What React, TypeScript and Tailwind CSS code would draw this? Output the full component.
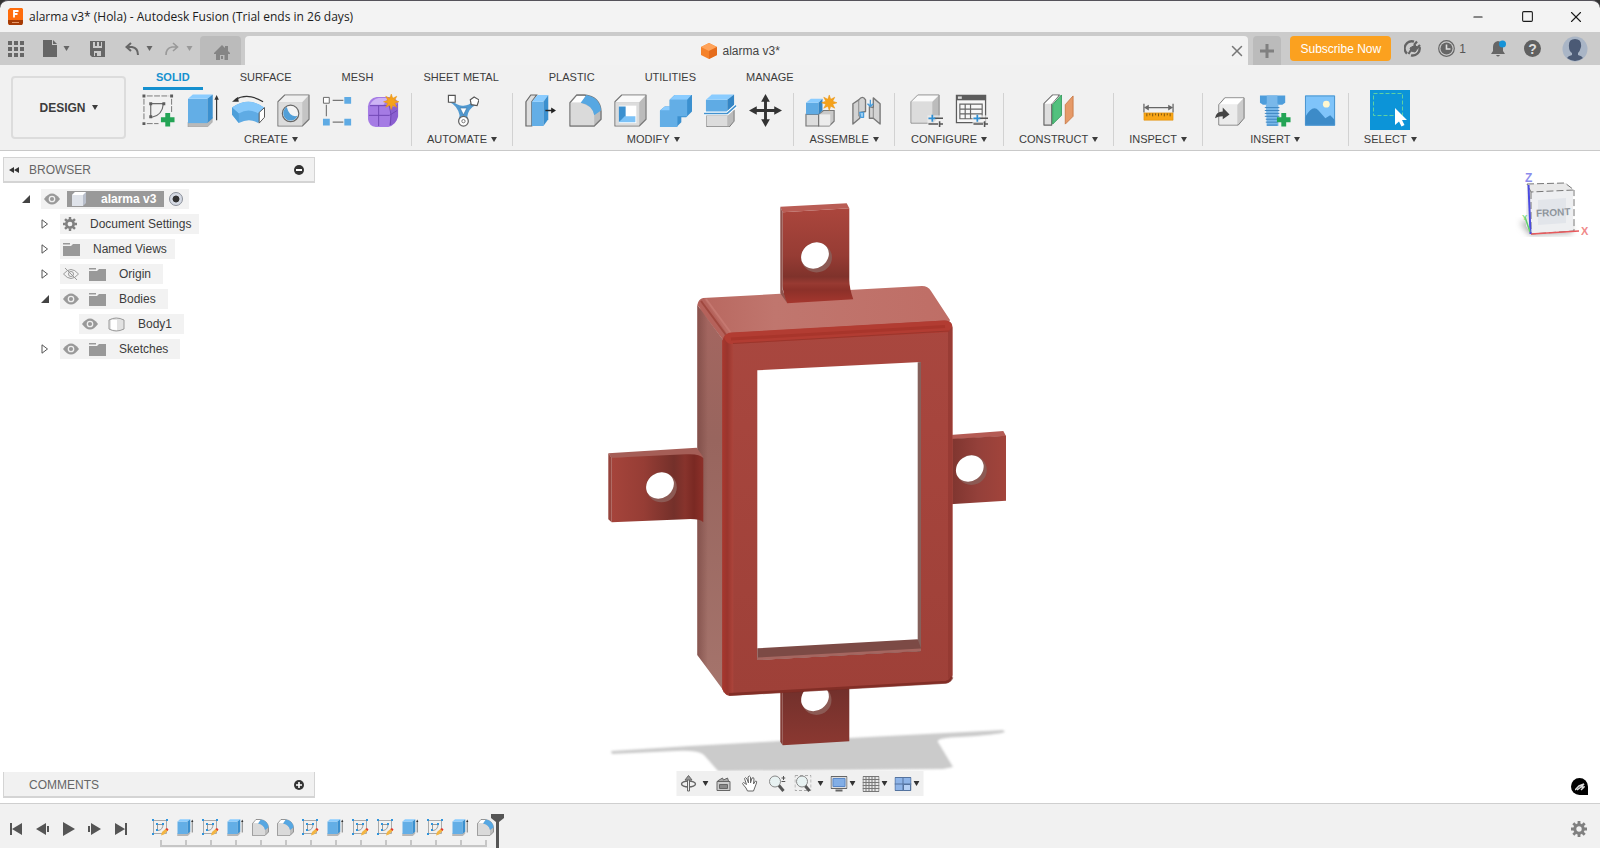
import React from 'react';
import { Minus, Square, X } from 'lucide-react';

type IconProps = { className?: string };

const tabs = ['SOLID', 'SURFACE', 'MESH', 'SHEET METAL', 'PLASTIC', 'UTILITIES', 'MANAGE'];

function Caret({ className = 'h-[5px] w-[6px]' }: IconProps) {
  return (
    <svg viewBox="0 0 6 5" className={`shrink-0 ${className}`} fill="currentColor">
      <path d="M0 0h6L3 5z" />
    </svg>
  );
}

function Star({ x, y }: { x: number; y: number }) {
  return (
    <path
      transform={`translate(${x} ${y})`}
      fill="#f5a21b"
      stroke="#e8920c"
      strokeWidth=".5"
      d="M0-8l1.500 4.400L5.700-5.700 3.600-1.500 8 0 3.600 1.500 5.700 5.700 1.500 3.600 0 8l-1.500-4.400-4.200 2.100 2.100-4.200L-8 0l4.400-1.500-2.100-4.200 4.200 2.100z"
    />
  );
}

/* ---------- ribbon icons, all on a 34 unit grid ---------- */

function SketchIcon() {
  return (
    <svg viewBox="0 0 34 34" fill="none">
      <path d="M5 2h23M2 5v22M5 30.500h12M30.500 5v14" stroke="#777" strokeDasharray="6 1.500" />
      <path d="M9 10h13M9 10v14M22 10q-1 12-12 14" stroke="#6a6a6a" strokeWidth="1.200" />
      <path d="M.5.500h3v3h-3zM29 .5h3v3h-3zM.5 29h3v3h-3zM7.500 8.500h3v3h-3zM21 8.500h3v3h-3zM7.500 22h3v3h-3z" fill="#5c5c5c" />
      <path d="M24 19.500h5V24h4.500v5H29v4.500h-5V29h-4.500v-5H24z" fill="#23a455" />
    </svg>
  );
}

function ExtrudeIcon() {
  return (
    <svg viewBox="0 0 34 34">
      <path d="M1 29h20l5-5v5l-5 5H1z" fill="#b9b9b9" stroke="#999" strokeWidth=".5" />
      <path d="M1 5h20v25H1z" fill="#63aee6" />
      <path d="M1 5l5-4.500h20.500L21 5z" fill="#8accff" />
      <path d="M21 5l5.500-4.500V25L21 30z" fill="#3b90cf" />
      <path d="M30.500 5v22" stroke="#333" strokeWidth="1.200" />
      <path d="M28.200 6l2.300-5 2.300 5z" fill="#333" />
    </svg>
  );
}

function RevolveIcon() {
  return (
    <svg viewBox="0 0 34 34">
      <path d="M3 6Q16-2 32 8" fill="none" stroke="#333" strokeWidth="1.200" />
      <path d="M0 8l6-5 1 5z" fill="#333" />
      <path d="M0 14Q17 2 33 14v7l-6 9q-9-6-20 0l-7-9z" fill="#5fabe4" />
      <path d="M0 14Q17 2 33 14l-6 6q-10-6-20 0z" fill="#86c8fa" />
      <path d="M7 20v10l-7-9v-7z" fill="#4e9fd9" />
      <path d="M33.500 14v10L28 30V19z" fill="#fff" stroke="#555" />
    </svg>
  );
}

function HoleIcon() {
  return (
    <svg viewBox="0 0 34 34" strokeLinejoin="round">
      <path d="M1 8l7-7h25v25l-7 7H1z" fill="#c4c4c4" stroke="#777" strokeWidth="1.200" />
      <path d="M1.500 8.500L8.500 1.500h24L26 8.500z" fill="#f0f0f0" />
      <path d="M1.500 8.500H26v24H1.500z" fill="#dcdcdc" />
      <circle cx="14" cy="20" r="8.500" fill="#f4f4f4" stroke="#666" strokeWidth="1.200" />
      <path d="M10 13.500a7.500 7.500 0 1 0 11 9q-8 2-11-9z" fill="#519fd8" />
    </svg>
  );
}

function PatternIcon() {
  return (
    <svg viewBox="0 0 34 34">
      <path d="M11 6.500h11M4.500 11v12M11 29h11" stroke="#777" strokeWidth="1.200" fill="none" />
      <path d="M1.500 3.500h6v6h-6z" fill="#fff" stroke="#666" />
      <path d="M23 3h7v7h-7zM1 25.500h7v7H1zM23 25.500h7v7h-7z" fill="#5fabe4" />
    </svg>
  );
}

function FormIcon() {
  return (
    <svg viewBox="0 0 34 34">
      <path d="M1 13Q2 4 10 3h13q8 1 9 6v14q-2 9-10 11H9q-7-1-8-8z" fill="#a57be4" />
      <path d="M3 11q3-6 9-7h10l-5 7z" fill="#cdb4f4" />
      <path d="M25 14q5-1 7-5v14q-2 8-9 10z" fill="#8a5fd0" />
      <path d="M12 12v21M2 22h21l8-5M3 12h20q3 9 1 20" stroke="#6f46b4" fill="none" />
      <Star x={25} y={8} />
    </svg>
  );
}

function AutomateIcon() {
  return (
    <svg viewBox="0 0 34 34">
      <path d="M4 5q8 8 14 7 6 0 10-5l3 4q-8 4-9 12l1 5H13l1-6Q12 12 3 8z" fill="#5199d0" />
      <path d="M14.500 14.500h7l-3.500 7z" fill="#fff" stroke="#356f9f" strokeWidth=".6" />
      <path d="M2.500 1.500h7v7h-7zM29 3l5 3-2 6-6-1-1-5z" fill="#fff" stroke="#555" strokeWidth="1.200" />
      <circle cx="18" cy="28" r="5" fill="#fff" stroke="#666" strokeWidth="1.300" />
      <circle cx="18" cy="28" r="1.700" fill="none" stroke="#777" />
    </svg>
  );
}

function PressPullIcon() {
  return (
    <svg viewBox="0 0 34 34">
      <path d="M2 8l5-7h6L8 8v25H2z" fill="#dedede" stroke="#666" strokeWidth="1.200" />
      <path d="M8 8h12v25H8z" fill="#63aee6" />
      <path d="M8 8l6-7h11l-5 7z" fill="#8accff" />
      <path d="M20 8l5-7v25l-5 7z" fill="#3b90cf" />
      <path d="M22 17h7" stroke="#222" strokeWidth="1.500" />
      <path d="M28 14l5 3-5 3z" fill="#222" />
    </svg>
  );
}

function FilletIcon() {
  return (
    <svg viewBox="0 0 34 34">
      <path d="M1 9l7-8h8q16 2 17 17v8l-7 7H1z" fill="#bdbdbd" stroke="#777" strokeWidth="1.400" strokeLinejoin="round" />
      <path d="M2 9l6-7h9l-4 7z" fill="#fff" />
      <path d="M1.700 9H11q14 3 15 13v10.300H1.700z" fill="#dadada" />
      <path d="M12 9l6-8q14 3 15 16l-7 5Q24 11 12 9z" fill="#56a7e2" />
    </svg>
  );
}

function ShellIcon() {
  return (
    <svg viewBox="0 0 34 34" strokeLinejoin="round">
      <path d="M1 8l7-7h25v25l-7 7H1z" fill="#bbb" stroke="#777" strokeWidth="1.200" />
      <path d="M1.500 8.500L8.500 1.500h24L26 8.500z" fill="#fafafa" />
      <path d="M1.500 8.500H26v24H1.500z" fill="#dcdcdc" />
      <path d="M5 12h18v18H5z" fill="#fff" />
      <path d="M5 13h7v11l-7 5z" fill="#3b90cf" />
      <path d="M5 29l6-6h11v6z" fill="#7cc2f7" />
    </svg>
  );
}

function CombineIcon() {
  return (
    <svg viewBox="0 0 34 34">
      <path d="M1 17l5-4h5V6l5-5h18v17l-6 6h-5v5l-5 5H1z" fill="#3b90cf" />
      <path d="M1 17h10V6h18v17H19v11H1z" fill="#63aee6" />
      <path d="M11 6l5-5h17.500L29 6zM1 17l5-4h5v4z" fill="#8accff" />
    </svg>
  );
}

function SplitIcon() {
  return (
    <svg viewBox="0 0 34 34">
      <path d="M3 22h20l8-6v12l-5 6H3z" fill="#bbb" stroke="#777" />
      <path d="M3 22h21v11H3z" fill="#dcdcdc" />
      <path d="M2 6h22v13H2z" fill="#5fabe4" />
      <path d="M2 6l6-5.500h23L24 6z" fill="#8accff" />
      <path d="M24 6l7-5.500V12l-7 7z" fill="#3485c4" />
      <path d="M0 20h24l9-8" stroke="#fff" strokeWidth="4" fill="none" />
      <path d="M0 20h24l9-8" stroke="#4292cf" strokeWidth="1.500" fill="none" />
    </svg>
  );
}

function MoveIcon() {
  return (
    <svg viewBox="0 0 34 34" fill="#333">
      <path d="M17 0l4.500 8h-3v7.500H26V12.500l8 4.500-8 4.500v-3h-7.500V26h3L17 34l-4.500-8h3v-7.500H8v3L0 17l8-4.500v3h7.500V8h-3z" />
    </svg>
  );
}

function AssembleIcon() {
  return (
    <svg viewBox="0 0 34 34">
      <path d="M1 21h13v12H1z" fill="#ddd" stroke="#777" strokeWidth="1.200" />
      <path d="M14 21l5-4h11v11l-5 5H14z" fill="#c9c9c9" stroke="#777" strokeWidth="1.200" />
      <path d="M15 21h11v11.500H15z" fill="#ececec" />
      <path d="M1 9h13v12H1z" fill="#5fabe4" />
      <path d="M1 9l5-4h12l-4 4z" fill="#8accff" />
      <path d="M14 9l4-4v12l-4 4z" fill="#3485c4" />
      <Star x={25} y={9} />
    </svg>
  );
}

function JointIcon() {
  return (
    <svg viewBox="0 0 34 34" strokeLinejoin="round">
      <path d="M3 10l6-4q4-5 7 0v12l-5 1-1 6-7 6z" fill="#d3d3d3" stroke="#777" strokeWidth="1.400" />
      <path d="M9 6v17" stroke="#888" />
      <path d="M20 13l4 1V4l7 6v21l-7-6h-4z" fill="#d3d3d3" stroke="#777" strokeWidth="1.400" />
      <path d="M24 14v11" stroke="#888" />
      <path d="M10 19h4v5h-3zM21 6v7M18 10l3 3 3-3" stroke="#4a9bd8" strokeWidth="1.300" fill="#9bd0f5" />
    </svg>
  );
}

function Sliders() {
  return (
    <g fill="none">
      <path d="M18 22h16v12H18z" fill="#f1f1f1" opacity=".7" />
      <path d="M25 25h9M19 31h10M30.500 28v6M31 31h3" stroke="#555" strokeWidth="1.600" />
      <path d="M19 25h7M23 21.500v7" stroke="#2f8fd3" strokeWidth="1.800" />
    </g>
  );
}

function ConfigureIcon() {
  return (
    <svg viewBox="0 0 34 34">
      <path d="M1 8l7-7h22v22l-7 7H1z" fill="#bcbcbc" stroke="#888" />
      <path d="M1.500 8L8 1.500h21.500L23 8z" fill="#fafafa" />
      <path d="M1.500 8H23v21.500H1.500z" fill="#dcdcdc" />
      <Sliders />
    </svg>
  );
}

function TableIcon() {
  return (
    <svg viewBox="0 0 34 34" fill="none">
      <path d="M1.500 1.500h30v28h-30z" fill="#f7f7f7" stroke="#5c5c5c" strokeWidth="1.300" />
      <path d="M1 1h31v5.500H1z" fill="#5c5c5c" />
      <path d="M3 2.500h4v2.500H3z" fill="#ddd" />
      <path d="M5 10.500h23v15H5zM5 15.500h23M5 20.500h23M10.500 10.500v15M16 10.500v15" stroke="#666" strokeWidth="1.200" />
      <Sliders />
    </svg>
  );
}

function PlaneIcon() {
  return (
    <svg viewBox="0 0 34 34" strokeLinejoin="round">
      <path d="M2 10l9-9h7l-8 9v22H2z" fill="#dedede" stroke="#666" strokeWidth="1.200" />
      <path d="M2.500 10L11 1.500h6L10 10z" fill="#fff" />
      <path d="M11 11l9-10v21l-9 9z" fill="#52c17e" stroke="#349c5d" />
      <path d="M24 11l8-9v21l-8 8z" fill="#e69a68" stroke="#cb7d4a" />
    </svg>
  );
}

function MeasureIcon() {
  return (
    <svg viewBox="0 0 34 34">
      <path d="M2 10v9M32 10v9M4 14h26" stroke="#666" strokeWidth="1.300" />
      <path d="M2 14l5-3v6zM32 14l-5-3v6z" fill="#666" />
      <path d="M2 19.500h30V27H2z" fill="#f8a516" stroke="#de8d07" strokeWidth=".6" />
      <path d="M5 20v3M8 20v2M11 20v3M14 20v2M17 20v3M20 20v2M23 20v3M26 20v2M29 20v3" stroke="#7a5310" />
    </svg>
  );
}

function DeriveIcon() {
  return (
    <svg viewBox="0 0 34 34">
      <path d="M5 11l6-7h20v21l-6 7H5z" fill="#ccc" stroke="#777" />
      <path d="M5.500 11l6-6.500h19L24 11z" fill="#fff" />
      <path d="M5.500 11H24v20.500H5.500z" fill="#ececec" />
      <path d="M1 25q1-7 8-7v-4l7 7-7 5v-3q-5 0-8 2z" fill="#444" />
    </svg>
  );
}

function FastenerIcon() {
  return (
    <svg viewBox="0 0 34 34">
      <path d="M1 1.500h26V9l-3 2H4L1 9z" fill="#4e9ddb" />
      <path d="M8 1.500h11V11H8zM7 10h13v23H8z" fill="#79b8ea" />
      <path d="M6 14h15M6 17h15M6 20h15M6 23h15M7 26h13M7 29h12M8 32h11" stroke="#3d84c0" />
      <path d="M23 19.500h5V24h4.500v5H28v4.500h-5V29h-4.500v-5H23z" fill="#23a455" />
    </svg>
  );
}

function ImageIcon() {
  return (
    <svg viewBox="0 0 34 34">
      <path d="M1 1.500h31v31H1z" fill="#7fc4fa" />
      <path d="M1 24q8-14 14-7l7 8 5-3 5 5v5.500H1z" fill="#3d8bc8" />
      <circle cx="23" cy="10.500" r="3.500" fill="#fff7cf" />
      <path d="M1.500 2h30v30h-30z" fill="none" stroke="#4a94cd" />
    </svg>
  );
}

function SelectIcon() {
  return (
    <svg viewBox="0 0 40 40">
      <path d="M0 0h40v40H0z" fill="#0c94d8" />
      <path d="M3.500 3.500h29v22h-29z" fill="none" stroke="#5ed1a2" strokeDasharray="4 2" />
      <path d="M25 18v17l4-3.500 2.500 5 3-1.500-2.500-5h5z" fill="#fff" />
    </svg>
  );
}

const groups = [
  {
    name: 'CREATE',
    wide: false,
    tools: [
      ['Create Sketch', SketchIcon],
      ['Extrude', ExtrudeIcon],
      ['Revolve', RevolveIcon],
      ['Hole', HoleIcon],
      ['Pattern', PatternIcon],
      ['Create Form', FormIcon],
    ],
  },
  { name: 'AUTOMATE', wide: true, tools: [['Automated Modeling', AutomateIcon]] },
  {
    name: 'MODIFY',
    wide: false,
    tools: [
      ['Press Pull', PressPullIcon],
      ['Fillet', FilletIcon],
      ['Shell', ShellIcon],
      ['Combine', CombineIcon],
      ['Split Body', SplitIcon],
      ['Move', MoveIcon],
    ],
  },
  { name: 'ASSEMBLE', wide: false, tools: [['New Component', AssembleIcon], ['Joint', JointIcon]] },
  { name: 'CONFIGURE', wide: true, tools: [['Configure', ConfigureIcon], ['Table', TableIcon]] },
  { name: 'CONSTRUCT', wide: true, tools: [['Offset Plane', PlaneIcon]] },
  { name: 'INSPECT', wide: true, tools: [['Measure', MeasureIcon]] },
  {
    name: 'INSERT',
    wide: false,
    tools: [['Derive', DeriveIcon], ['Fastener', FastenerIcon], ['Canvas', ImageIcon]],
  },
  { name: 'SELECT', wide: true, tools: [['Select', SelectIcon]] },
] as { name: string; wide: boolean; tools: [string, React.FC][] }[];

/* ---------- title and document tabs ---------- */

function TitleBar() {
  return (
    <header className="flex h-8 shrink-0 items-center rounded-t-lg border-t border-[#55525a] bg-[#f3f3f3] pl-2 font-['Open_Sans','Noto_Sans',sans-serif] text-xs text-[#1b1b1b]">
      <svg viewBox="0 0 15 17" className="mr-[6px] h-[17px] w-[15px]">
        <path d="M2 0h12l1 1v13l-1 3H1l-1-2V2z" fill="#ff6d0c" />
        <path d="M0 12h15v3l-1 2H1l-1-2z" fill="#a63c06" />
        <path d="M6 9.500V3h4.500M6 6h3.500" stroke="#fff" strokeWidth="1.800" fill="none" />
        <path d="M4 14.500h7" stroke="#e99a6a" />
      </svg>
      <h1>alarma v3* (Hola) - Autodesk Fusion (Trial ends in 26 days)</h1>
      <div className="ml-auto flex h-full">
        <button aria-label="Minimize" className="flex w-12 items-center justify-center">
          <Minus className="h-[14px] w-[14px]" strokeWidth={2} />
        </button>
        <button aria-label="Maximize" className="flex w-[50px] items-center justify-center">
          <Square className="h-[13px] w-[13px]" strokeWidth={2} />
        </button>
        <button aria-label="Close" className="flex w-12 items-center justify-center">
          <X className="h-[18px] w-[18px]" strokeWidth={1.5} />
        </button>
      </div>
    </header>
  );
}

function TabBar() {
  return (
    <div className="flex h-[33px] shrink-0 items-end bg-[#cbcbcb] text-[#666]">
      <div className="flex h-full w-[200px] items-center pl-2">
        <button aria-label="Data panel">
          <svg viewBox="0 0 16 16" className="h-4 w-4" fill="currentColor">
            <path d="M0 0h4v4H0zM6 0h4v4H6zM12 0h4v4h-4zM0 6h4v4H0zM6 6h4v4H6zM12 6h4v4h-4zM0 12h4v4H0zM6 12h4v4H6zM12 12h4v4h-4z" />
          </svg>
        </button>
        <button aria-label="File" className="ml-[19px] flex items-center gap-[6px]">
          <svg viewBox="0 0 14 17" className="h-[17px] w-[14px]" fill="currentColor">
            <path d="M0 0h9v5h5v12H0zM10 0l4 4h-4z" />
          </svg>
          <Caret className="h-[5px] w-[7px]" />
        </button>
        <button aria-label="Save" className="ml-5">
          <svg viewBox="0 0 15 16" className="h-4 w-[15px]" fill="currentColor">
            <path fillRule="evenodd" d="M0 0h15v16H2l-2-2zM3 1v6h9V1zM4 10v5h7v-5z" />
            <path d="M5 1h2v4H5zM9 1h2v4H9zM5 12h2v3H5z" />
          </svg>
        </button>
        <button aria-label="Undo" className="ml-5 flex items-center gap-[7px]">
          <svg viewBox="0 0 14 13" className="h-[13px] w-[14px]" fill="none" stroke="currentColor" strokeWidth="2">
            <path d="M6 1L1.500 5 6 9M2 5h5q6 1 6 8" />
          </svg>
          <Caret className="h-[5px] w-[7px]" />
        </button>
        <button aria-label="Redo" className="ml-3 flex items-center gap-[7px] text-[#999]">
          <svg viewBox="0 0 14 13" className="h-[13px] w-[14px]" fill="none" stroke="currentColor" strokeWidth="1.600">
            <path d="M8 1l4.500 4L8 9M12 5H7Q1 6 1 13" />
          </svg>
          <Caret className="h-[5px] w-[7px]" />
        </button>
      </div>
      <button aria-label="Home" className="flex h-[29px] w-[41px] items-center justify-center rounded-t bg-[#bbb] text-[#858585]">
        <svg viewBox="0 0 16 15" className="mt-[3px] ml-[3px] h-[15px] w-4" fill="currentColor">
          <path d="M8 0l3 3V1h3v5l2 2v1h-2v6h-3.500v-5H6v5H2V9H0V8z" />
          <path d="M7 11h2v3H7z" />
        </svg>
      </button>
      <div className="ml-1 flex h-[29px] min-w-0 flex-1 items-center rounded-t bg-[#f2f2f2] pt-px text-[#444]">
        <div className="flex flex-1 items-center justify-center gap-[5px] pl-2 text-xs">
          <svg viewBox="0 0 16 16" className="h-4 w-4">
            <path d="M8 0l8 4v8l-8 4-8-4V4z" fill="#f5822a" />
            <path d="M8 0l8 4-8 4-8-4z" fill="#ffa35a" />
            <path d="M8 8l8-4v8l-8 4z" fill="#e56c1c" />
          </svg>
          <span>alarma v3*</span>
        </div>
        <button aria-label="Close tab" className="mr-[2px] text-[#777]">
          <X className="h-[18px] w-[18px]" />
        </button>
      </div>
      <button aria-label="New tab" className="ml-[5px] flex h-[29px] w-7 items-center justify-center rounded-t bg-[#bbb] text-[#808080]">
        <svg viewBox="0 0 14 14" className="h-[14px] w-[14px]" fill="currentColor">
          <path d="M5.500 0h3v5.500H14v3H8.500V14h-3V8.500H0v-3h5.500z" />
        </svg>
      </button>
      <div className="flex h-full items-center pr-3 pl-[9px]">
        <button className="h-[25px] w-[101px] rounded bg-[#fba11f] text-xs text-white">Subscribe Now</button>
        <button aria-label="Extensions" className="ml-[13px]">
          <svg viewBox="0 0 17 17" className="h-[17px] w-[17px]" fill="none" stroke="#636363">
            <path d="M10 1.700A7 7 0 0 0 3 13.500M7 15.300A7 7 0 0 0 15.500 7" strokeWidth="2.400" />
            <path d="M6 8l5-3 3 3-3 4-4-1z" fill="#636363" strokeWidth="1" />
            <path d="M10 5l3-3.500M13 8l3-3" strokeWidth="2.200" />
            <path d="M7 10l-2.500 4" strokeWidth="2" />
          </svg>
        </button>
        <button aria-label="Job status" className="ml-[17px] flex items-center gap-1 text-xs text-[#555]">
          <svg viewBox="0 0 17 17" className="h-[17px] w-[17px]">
            <circle cx="8.500" cy="8.500" r="7.800" fill="none" stroke="#666" strokeWidth="1.200" />
            <circle cx="8.500" cy="8.500" r="6" fill="#666" />
            <path d="M8.500 4.500v4.500h4" stroke="#ddd" strokeWidth="1.600" fill="none" />
          </svg>
          <span>1</span>
        </button>
        <button aria-label="Notifications" className="ml-[25px]">
          <svg viewBox="0 0 16 17" className="h-[17px] w-4">
            <path d="M7 1q5 1 5 6v4l2 3H0l2-3V7q0-5 5-6zM5 15h4q-2 3-4 0z" fill="#666" />
            <circle cx="11.500" cy="4" r="3.500" fill="#1593d8" />
          </svg>
        </button>
        <button
          aria-label="Help"
          className="ml-[17px] flex h-[17px] w-[17px] items-center justify-center rounded-full bg-[#606060] text-sm font-bold text-[#ddd]"
        >
          ?
        </button>
        <button aria-label="Account" className="ml-[21px]">
          <svg viewBox="0 0 26 26" className="h-[26px] w-[26px]">
            <circle cx="13" cy="13" r="12.500" fill="#a9b5c6" />
            <path d="M13 3q7 0 6 8-1 4-3 6v2q4 1 5 3-8 6-16 0 1-2 5-3v-2q-3-2-3-6-1-8 6-8z" fill="#4b5a75" />
          </svg>
        </button>
      </div>
    </div>
  );
}

function Ribbon() {
  return (
    <div className="flex h-[86px] shrink-0 border-b border-[#c9c9c9] bg-[#f1f1f1] text-[11px] text-[#3c3c3c]">
      <button className="mt-[11px] ml-[11px] flex h-[63px] w-[115px] shrink-0 items-center justify-center gap-[6px] rounded border-2 border-[#dcdcdc] text-xs font-bold">
        DESIGN <Caret />
      </button>
      <div className="ml-[5px]">
        <nav className="flex gap-6 pl-3">
          {tabs.map((tab) => (
            <button
              key={tab}
              className={`h-[25px] border-b-3 px-[13px] pt-[2px] ${
                tab === 'SOLID' ? 'border-[#1590cf] font-bold text-[#1590cf]' : 'border-transparent'
              }`}
            >
              {tab}
            </button>
          ))}
        </nav>
        <div className="mt-[3px] flex">
          {groups.map((group) => (
            <div
              key={group.name}
              className={`flex h-[53px] flex-col items-center justify-between border-r border-[#d2d2d2] last:border-r-0 ${
                group.wide ? 'px-[15px]' : 'px-[11px]'
              }`}
            >
              <div className="flex h-[34px] items-center gap-3">
                {group.tools.map(([label, Icon]) => (
                  <button key={label} aria-label={label} className={label === 'Select' ? 'w-10' : 'w-[33px]'}>
                    <Icon />
                  </button>
                ))}
              </div>
              <button className="flex items-center gap-1 leading-[14px]">
                {group.name} <Caret />
              </button>
            </div>
          ))}
        </div>
      </div>
    </div>
  );
}

/* ---------- browser tree ---------- */

function EyeIcon({ off }: { off?: boolean }) {
  return (
    <svg viewBox="0 0 16 12" className="h-3 w-4 shrink-0">
      {off ? (
        <g fill="none" stroke="#999">
          <path d="M.5 6Q8-3 15.500 6 8 15 .5 6zM2 0l12 12" />
          <circle cx="8" cy="6" r="2.500" />
        </g>
      ) : (
        <g>
          <path d="M0 6q8-11 16 0-8 11-16 0z" fill="#999" />
          <circle cx="8" cy="6" r="2.700" fill="#999" stroke="#eee" strokeWidth="1.300" />
        </g>
      )}
    </svg>
  );
}

function FolderIcon() {
  return (
    <svg viewBox="0 0 17 14" className="h-[14px] w-[17px] shrink-0" fill="#999">
      <path d="M0 1h7v1.500H0zM0 4h8l2-2h7v12H0z" />
    </svg>
  );
}

function GearIcon({ className = 'h-[14px] w-[14px]' }: IconProps) {
  return (
    <svg viewBox="0 0 16 16" className={`shrink-0 ${className}`} fill="none" stroke="#808080">
      <circle cx="8" cy="8" r="4.200" strokeWidth="3" />
      <path d="M8 0v3M8 13v3M0 8h3M13 8h3M2.300 2.300l2.200 2.200M11.500 11.500l2.200 2.200M2.300 13.700l2.200-2.200M11.500 4.500l2.200-2.200" strokeWidth="2.800" />
    </svg>
  );
}

function BodyIcon() {
  return (
    <svg viewBox="0 0 17 15" className="h-[15px] w-[17px] shrink-0">
      <path d="M1 3q7-4 15 0v9q-8 4-15 0z" fill="#e2e2e2" stroke="#999" />
      <path d="M3 3h6v10q-4 0-6-1z" fill="#fff" />
    </svg>
  );
}

function Expander({ open }: { open?: boolean }) {
  return (
    <button aria-label={open ? 'Collapse' : 'Expand'} className="w-2">
      <svg viewBox="0 0 8 10" className="h-[10px] w-2">
        {open ? <path d="M8 1v8H0z" fill="#444" /> : <path d="M1 .8l5.500 4.200L1 9.200z" fill="#fff" stroke="#555" />}
      </svg>
    </button>
  );
}

const rows = [
  { name: 'Document Settings', icon: 'gear' },
  { name: 'Named Views', icon: 'folder' },
  { name: 'Origin', icon: 'folder', eye: 'off' },
  { name: 'Bodies', icon: 'folder', eye: 'on', open: true },
  { name: 'Body1', icon: 'body', eye: 'on', leaf: true },
  { name: 'Sketches', icon: 'folder', eye: 'on' },
];

function Browser() {
  return (
    <aside className="absolute top-[6px] left-[3px] w-[312px] text-xs text-[#3c3c3c]">
      <div className="flex h-[26px] items-center border border-b-2 border-[#d4d4d4] bg-[#f1f1f1] px-[5px] pt-px text-[#666]">
        <svg viewBox="0 0 10 6" className="mr-[10px] h-[6px] w-[10px]" fill="#333">
          <path d="M5 0v6L0 3zM10 0v6L5 3z" />
        </svg>
        <h2>BROWSER</h2>
        <button aria-label="Hide browser" className="mr-[5px] ml-auto">
          <svg viewBox="0 0 10 10" className="h-[10px] w-[10px]">
            <circle cx="5" cy="5" r="5" fill="#333" />
            <path d="M2 5h6" stroke="#fff" strokeWidth="2" />
          </svg>
        </button>
      </div>
      <ul className="mt-[6px] flex flex-col gap-[5px]">
        <li className="flex h-5 items-center gap-[11px] pl-[19px]">
          <Expander open />
          <div className="flex h-full items-center bg-[#f2f2f2] pr-[6px] pl-[3px]">
            <EyeIcon />
            <div className="ml-[7px] flex h-4 items-center bg-[#999] pr-2 pl-[5px] font-bold text-white">
              <svg viewBox="0 0 14 14" className="mr-[15px] h-[14px] w-[14px]">
                <path d="M0 3l3-3h11v11l-3 3H0z" fill="#b9bfcb" />
                <path d="M0 3h11v11H0z" fill="#dfe3ea" />
                <path d="M0 3l3-3h11l-3 3z" fill="#fff" />
              </svg>
              alarma v3
            </div>
            <input
              type="radio"
              defaultChecked
              aria-label="Activate alarma v3"
              className="ml-[5px] h-[14px] w-[14px] appearance-none rounded-full border border-[#8a8f99] bg-radial from-[#333] from-35% to-[#d5dae4] to-45%"
            />
          </div>
        </li>
        {rows.map((row) => (
          <li key={row.name} className={`flex h-5 items-center gap-[11px] ${row.leaf ? 'pl-[76px]' : 'pl-[38px]'}`}>
            {!row.leaf && <Expander open={row.open} />}
            <div className={`flex h-full items-center bg-[#f2f2f2] pl-[3px] ${row.eye ? 'pr-3' : 'pr-2'}`}>
              {row.eye && (
                <span className="mr-[10px]">
                  <EyeIcon off={row.eye === 'off'} />
                </span>
              )}
              {row.icon === 'gear' && <GearIcon />}
              {row.icon === 'folder' && <FolderIcon />}
              {row.icon === 'body' && <BodyIcon />}
              <span className="ml-[13px]">{row.name}</span>
            </div>
          </li>
        ))}
      </ul>
    </aside>
  );
}

/* ---------- viewport ---------- */

function Model() {
  return (
    <svg viewBox="590 164 420 626" className="h-[626px] w-[420px] shrink-0" role="img" aria-label="alarma v3 body">
      <defs>
        <linearGradient id="tabTop" x1="0" y1="0" x2="0" y2="1">
          <stop offset="0" stopColor="#ab463d" />
          <stop offset=".5" stopColor="#963c34" />
          <stop offset=".72" stopColor="#7f322b" />
          <stop offset=".79" stopColor="#983a32" />
          <stop offset=".86" stopColor="#8c3029" />
          <stop offset="1" stopColor="#a5372e" />
        </linearGradient>
        <linearGradient id="tabLeft" x1="0" y1="0" x2="1" y2="0">
          <stop offset="0" stopColor="#a5443b" />
          <stop offset=".35" stopColor="#963d35" />
          <stop offset=".68" stopColor="#74302a" />
          <stop offset=".8" stopColor="#87332c" />
          <stop offset=".9" stopColor="#7a2923" />
          <stop offset="1" stopColor="#8d3029" />
        </linearGradient>
        <linearGradient id="tabRight" x1="0" y1="0" x2="1" y2="0">
          <stop offset="0" stopColor="#7e352f" />
          <stop offset=".5" stopColor="#94403a" />
          <stop offset="1" stopColor="#a2443b" />
        </linearGradient>
        <linearGradient id="tabBottom" x1="0" y1="0" x2="0" y2="1">
          <stop offset="0" stopColor="#6e2f2b" />
          <stop offset="1" stopColor="#8b3831" />
        </linearGradient>
        <linearGradient id="topFace" x1="0" y1="0" x2="1" y2="0">
          <stop offset="0" stopColor="#b8675f" />
          <stop offset=".3" stopColor="#c0766e" />
          <stop offset="1" stopColor="#bf6e66" />
        </linearGradient>
        <linearGradient id="sideFace" x1="0" y1="0" x2="0" y2="1">
          <stop offset="0" stopColor="#a56660" />
          <stop offset=".35" stopColor="#98655e" />
          <stop offset="1" stopColor="#a5746c" />
        </linearGradient>
        <linearGradient id="sideShade" x1="0" y1="0" x2="1" y2="0">
          <stop offset="0" stopColor="#6b3a36" stopOpacity=".5" />
          <stop offset=".4" stopColor="#6b3a36" stopOpacity="0" />
        </linearGradient>
        <linearGradient id="frontFace" x1="0" y1="0" x2="0" y2="1">
          <stop offset="0" stopColor="#a9473f" />
          <stop offset="1" stopColor="#9e4038" />
        </linearGradient>
        <linearGradient id="bevelLeft" x1="0" y1="0" x2="1" y2="0">
          <stop offset="0" stopColor="#a8372e" />
          <stop offset=".45" stopColor="#9a352d" />
          <stop offset="1" stopColor="#ac453c" />
        </linearGradient>
        <filter id="soft">
          <feGaussianBlur stdDeviation="1" />
        </filter>
      </defs>

      {/* floor shadow */}
      <path
        d="M611 751l79-5 90-5 70-3 153-8 2 2q-8 3-45 5-25 1-22 5l15 25-10 2-225 2-14-16q-6-5-28-4l-64 3z"
        fill="#cbcbcb"
        filter="url(#soft)"
      />

      {/* bottom tab */}
      <path d="M780.300 680v61.700l2.400 3.600v-60z" fill="#833c36" />
      <path d="M782.700 680h66.600v61.300l-66.600 4z" fill="url(#tabBottom)" />
      <ellipse cx="816.500" cy="700" rx="15" ry="15" fill="#8c5a54" />
      <ellipse cx="815" cy="698" rx="14.500" ry="12.500" fill="#fff" transform="rotate(-35 815 698)" />

      {/* right tab */}
      <path d="M950 435l53.300-4 2.700 5-56 3.500z" fill="#b45b54" />
      <path d="M950 439l56-3.300v65l-56 3.500z" fill="url(#tabRight)" />
      <ellipse cx="971.500" cy="470" rx="15.300" ry="15" fill="#8c5a54" />
      <ellipse cx="969.800" cy="468.500" rx="14.500" ry="12.500" fill="#fff" transform="rotate(-35 969.800 468.500)" />

      {/* frame */}
      <path d="M703 298l219-12q6 0 9 5l19 29-6 14-216 12-28-36z" fill="url(#topFace)" />
      <path d="M697.300 305q1-6 6-7l24 36-1 10-25-34z" fill="#b5625b" />
      <path d="M701 301l25 34" stroke="#a0483f" strokeWidth="2" />
      <path d="M706 299l25 34" stroke="#c57870" strokeWidth="2" />
      <path d="M697.300 305l26.700 36v352l-2-4.500-24.700-33.500z" fill="url(#sideFace)" />
      <path d="M697.300 305l26.700 36v352l-2-4.500-24.700-33.500z" fill="url(#sideShade)" />
      <path
        fillRule="evenodd"
        d="M722.300 341q1-7 8-8l214-12.500q8-.5 8.400 7V675q-.5 7.500-7 8.300l-216 12.400q-4 0-7.400-7zM757.300 370.300V660L921 651V362z"
        fill="url(#frontFace)"
      />
      <path d="M722.300 341q1-4 5-6l6 8v350l-5 2.500q-4-1-6-7z" fill="url(#bevelLeft)" />
      <path d="M724 337q2-4 7-4.500L944 320.500q6 0 8 5l-3 6.500-218 12q-5 0-7-7z" fill="#b23c32" />
      <path d="M731 339l214-12.500" stroke="#a8352b" strokeWidth="3" />
      <path d="M733 343.500l216-12.500" stroke="#94342b" opacity=".8" />
      <path d="M948 332l4-5v349l-4 3z" fill="#8f352e" opacity=".6" />
      <path d="M729 694.500l217-12.300q4-.5 6-5" fill="none" stroke="#762620" strokeWidth="3" opacity=".7" />

      {/* window reveal */}
      <path d="M917.700 362.200l3.300-.2v289l-3.300 1z" fill="#85605b" />
      <path d="M757.300 648.300l160.400-9 3.300 9v3L757.300 660z" fill="#7c4a45" />
      <path d="M757.300 657.500l163.700-9v2.500l-163.700 9z" fill="#a56660" />

      {/* top tab */}
      <path d="M780.300 206.700l66.400-3.400 2.600 5-66.600 4z" fill="#b95d55" />
      <path d="M780.300 206.700l2.400 5.600V290l4.600 13.300-7-10z" fill="#8f534d" />
      <path d="M782.700 212.300l66.600-4V280q0 8 4 19.300l-66 4Q783 294 782.700 286z" fill="url(#tabTop)" />
      <ellipse cx="816.500" cy="257.500" rx="15.500" ry="15" fill="#8c5a54" />
      <ellipse cx="815" cy="255.500" rx="14.500" ry="12.500" fill="#fff" transform="rotate(-35 815 255.500)" />

      {/* left tab */}
      <path d="M608.300 453.300l88.400-5.600 6.600 9.300-91.600 1z" fill="#a55e57" />
      <path d="M608.300 453.300l3.400 4.400v64.600l-3.400-3z" fill="#96443c" />
      <path d="M611.700 457.700l74-3.400q14-1 17.600 4v64q-4-4-18-3l-73.600 3z" fill="url(#tabLeft)" />
      <ellipse cx="661.500" cy="487.300" rx="15.300" ry="15" fill="#8c5a54" />
      <ellipse cx="660" cy="485.500" rx="14.500" ry="12.500" fill="#fff" transform="rotate(-35 660 485.500)" />
    </svg>
  );
}

function ViewCube() {
  return (
    <svg
      viewBox="1515 165 80 80"
      className="absolute top-[14px] right-[5px] h-20 w-20 font-['Liberation_Sans',sans-serif] font-bold"
    >
      <defs>
        <filter id="cubeShadow">
          <feGaussianBlur stdDeviation="3" />
        </filter>
      </defs>
      <path d="M1520 222l10 13 43-2-6-14z" fill="#aaa" filter="url(#cubeShadow)" />
      <path d="M1527 184l39-1 7 8v41l-42 2-5-8z" fill="#e9e9e9" />
      <path d="M1531 192l42-2v42l-42 2z" fill="#eeeff1" />
      <path d="M1538 200l28-2v25l-28 2z" fill="#e2e5ea" />
      <path
        d="M1527 184l38-1 9 7-43 2zM1531 192v42l43-3v-41"
        fill="none"
        stroke="#777"
        strokeDasharray="7 3"
      />
      <path d="M1531 234l48-3" stroke="#e8595c" strokeWidth="1.500" />
      <path d="M1530.500 234l-2-49" stroke="#4a4ae0" strokeWidth="2" />
      <path d="M1530 232l-5-15" stroke="#5fd06c" strokeWidth="1.500" />
      <text x="1525" y="182" fontSize="12" fill="#8c8cec">Z</text>
      <text x="1581" y="235" fontSize="11" fill="#f08a8a">X</text>
      <text x="1522" y="220" fontSize="8" fill="#7edb88">Y</text>
      <text x="1536" y="216" fontSize="10" fill="#8f959c" transform="rotate(-3 1552 213)">FRONT</text>
    </svg>
  );
}

function NavBar() {
  return (
    <div className="absolute bottom-[7px] left-1/2 flex h-[25px] w-[247px] -translate-x-1/2 items-center bg-[#f0f0f0] pl-1 text-[#333]">
      <button aria-label="Orbit" className="flex items-center gap-[6px]">
        <svg viewBox="0 0 16 17" className="h-[17px] w-4" fill="none" stroke="#666">
          <ellipse cx="8" cy="9" rx="7" ry="3" strokeWidth="1.400" />
          <path d="M7 4h2v12H7z" fill="#eee" />
          <path d="M4.500 5L8 .5 11.500 5z" fill="#999" />
        </svg>
        <Caret />
      </button>
      <button aria-label="Look at" className="ml-[7px]">
        <svg viewBox="0 0 16 16" className="h-4 w-4" stroke="#666">
          <path d="M1.500 5.500h13v9h-13z" fill="#ccc" />
          <path d="M4 8.500h8v4H4z" fill="#888" />
          <path d="M2 5l5-3 1 2 4-2 1 3" fill="#aaa" />
        </svg>
      </button>
      <button aria-label="Pan" className="ml-[10px]">
        <svg viewBox="0 0 16 17" className="h-[17px] w-4">
          <path d="M6 16q-1-3-4-6-2-2 0-2.500l3 2-2-6q1-2 2.500.5L7 8 6.500 2q1.500-2 2.500 0v6l1.500-5q2-1 2 1L12 9l2-3q2 0 1 2l-3 8z" fill="#fff" stroke="#666" />
        </svg>
      </button>
      <button aria-label="Zoom" className="ml-[11px]">
        <svg viewBox="0 0 17 17" className="h-[17px] w-[17px]" fill="none" stroke="#555">
          <path d="M10 10l5 6" strokeWidth="3" />
          <circle cx="6.500" cy="6.500" r="5.500" fill="#e8f2f2" stroke="#888" />
          <path d="M13 3h4M15 1v4M13 6.500h4" />
        </svg>
      </button>
      <button aria-label="Fit" className="ml-[9px] flex items-center gap-[6px]">
        <svg viewBox="0 0 17 17" className="h-[17px] w-[17px]" fill="none" stroke="#555">
          <path d="M.5.500h16v15H.5z" stroke="#aaa" strokeDasharray="3 2" />
          <path d="M10 10l5 6" strokeWidth="3" />
          <circle cx="7.500" cy="6.500" r="5.500" fill="#e8f2f2" stroke="#888" />
        </svg>
        <Caret />
      </button>
      <button aria-label="Display settings" className="ml-[7px] flex items-center gap-[2px]">
        <svg viewBox="0 0 17 16" className="h-4 w-[17px]" stroke="#666">
          <path d="M.5.500h16v12H.5z" fill="#ddd" />
          <path d="M2.500 2.500h12v8h-12z" fill="#82aee6" stroke="#5a88c8" />
          <path d="M5 14.500h7" strokeWidth="2" />
        </svg>
        <Caret />
      </button>
      <button aria-label="Grid and snaps" className="ml-[7px] flex items-center gap-[2px]">
        <svg viewBox="0 0 17 16" className="h-4 w-[17px]" stroke="#777" fill="#e8e8e8">
          <path d="M.5.500h16v15H.5z" />
          <path d="M3.500 0v16M6.500 0v16M9.500 0v16M12.500 0v16M0 3.500h17M0 6.500h17M0 9.500h17M0 12.500h17" />
        </svg>
        <Caret />
      </button>
      <button aria-label="Viewports" className="ml-[7px] flex items-center gap-[2px]">
        <svg viewBox="0 0 17 14" className="h-[14px] w-[17px]" stroke="#54739f">
          <path d="M.5.500h16v13H.5z" fill="#8eb4e8" />
          <path d="M8.500 0v14M0 7h17" />
          <path d="M9 7.500h7v6H9z" fill="#b5d0f5" />
        </svg>
        <Caret />
      </button>
    </div>
  );
}

function Viewport() {
  return (
    <main className="relative flex min-h-0 flex-1 items-center justify-center overflow-hidden bg-white">
      <Model />
      <Browser />
      <ViewCube />
      <div className="absolute bottom-[5px] left-[3px] flex h-[26px] w-[312px] items-center border border-t-0 border-b-2 border-[#d4d4d4] bg-[#f1f1f1] pt-px pr-[10px] pl-[25px] text-xs text-[#666]">
        <h2>COMMENTS</h2>
        <button aria-label="Show comments" className="ml-auto">
          <svg viewBox="0 0 10 10" className="h-[10px] w-[10px]">
            <circle cx="5" cy="5" r="5" fill="#333" />
            <path d="M2 5h6M5 2v6" stroke="#fff" strokeWidth="1.600" />
          </svg>
        </button>
      </div>
      <NavBar />
      <button
        aria-label="Assistant"
        className="absolute right-3 bottom-2 flex h-[17px] w-[17px] items-center justify-center rounded-full rounded-br-none bg-black"
      >
        <svg viewBox="0 0 10 8" className="h-2 w-[10px]" fill="none" stroke="#ddd" strokeWidth="1.500">
          <path d="M0 7l4-4 5-2-3 3 3 0-3 3M2 7l4-3" />
        </svg>
      </button>
    </main>
  );
}

/* ---------- timeline ---------- */

function SketchFeature() {
  return (
    <svg viewBox="0 0 17 17" className="h-[17px] w-[17px]" fill="none">
      <path d="M1.500 1.500h13v13h-13z" stroke="#aaa" />
      <path d="M4.500 5.500h7M5.500 5v6.500M11 5q0 6-5 6.500" stroke="#999" />
      <path d="M0 0h2v2H0zM14 0h2v2h-2zM0 14h2v2H0zM4 4h2v2H4zM10 4h2v2h-2zM4 10h2v2H4z" fill="#2f94dc" />
      <path d="M9 16.500l1-3.500 4-3.500 2 2-4 4z" fill="#f2b544" />
      <path d="M13.500 10l1.500-1 1.500 1.500-1 1.500z" fill="#e5322d" />
    </svg>
  );
}

const playback = [
  ['Go to start', 'M2 2h2v12H2zM14 2v12L4 8z'],
  ['Step back', 'M12 2v12L2 8zM13 5h2v6h-2z'],
  ['Play', 'M3 1l12 7-12 7z'],
  ['Step forward', 'M5 2v12l10-6zM2 5h2v6H2z'],
  ['Go to end', 'M13 2h2v12h-2zM3 2v12l10-6z'],
];

const features = [
  'sketch', 'extrude', 'sketch', 'extrude', 'fillet', 'fillet', 'sketch',
  'extrude', 'sketch', 'sketch', 'extrude', 'sketch', 'extrude', 'fillet',
];

function Timeline() {
  return (
    <footer className="flex h-[45px] shrink-0 border-t border-[#cfcfcf] bg-[#f1f1f1] pl-2">
      <div className="flex w-[144px] items-center gap-[10px] pt-[6px]">
        {playback.map(([label, d]) => (
          <button key={label} aria-label={label}>
            <svg viewBox="0 0 16 16" className="h-4 w-4" fill="#555">
              <path d={d} />
            </svg>
          </button>
        ))}
      </div>
      <ol className="flex h-full pt-[15px]">
        {features.map((feature, i) => (
          <li key={i} className="group flex w-[25px] flex-col">
            <button aria-label={feature} className="h-[17px] w-[17px]">
              {feature === 'sketch' && <SketchFeature />}
              {feature === 'extrude' && <ExtrudeIcon />}
              {feature === 'fillet' && <FilletIcon />}
            </button>
            <div className="mt-1 ml-2 h-[7px] w-[25px] border-b-2 border-l-2 border-[#c6c6c6] group-last:w-[2px] group-last:border-b-0" />
          </li>
        ))}
      </ol>
      <svg viewBox="0 0 13 34" className="mt-[10px] -ml-[11px] h-[34px] w-[13px]" fill="#555">
        <path d="M0 0h13v4L8 8v26H5V8L0 4z" />
      </svg>
      <button aria-label="Timeline settings" className="mt-[5px] mr-[13px] ml-auto">
        <GearIcon className="h-4 w-4" />
      </button>
    </footer>
  );
}

export default function App() {
  return (
    <div className="flex h-screen flex-col overflow-hidden bg-[#333] font-['Liberation_Sans',Arial,sans-serif]">
      <TitleBar />
      <TabBar />
      <Ribbon />
      <Viewport />
      <Timeline />
    </div>
  );
}
